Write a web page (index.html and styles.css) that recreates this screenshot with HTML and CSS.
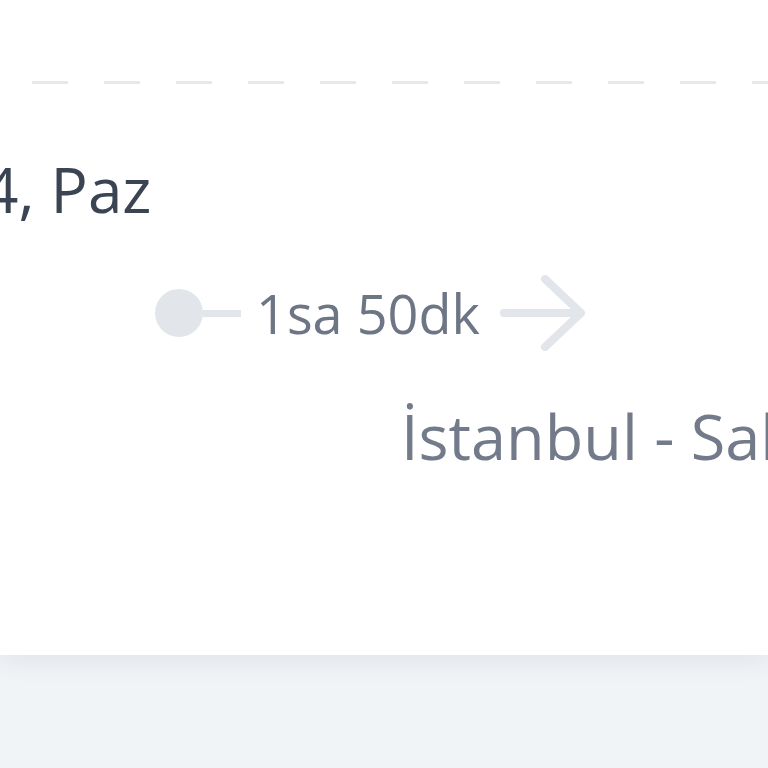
FILE: index.html
```html
<!DOCTYPE html>
<html lang="tr">
<head>
  <meta charset="UTF-8" />
  <meta name="viewport" content="width=device-width, initial-scale=1.0"/>
  <title>Uçuş Detayı</title>
  <link rel="stylesheet" href="styles.css">
</head>
<body>
  <div class="card">
    <div class="divider"></div>

    <div class="date">4, Paz</div>

    <div class="duration">
      <span class="dot"></span>
      <span class="stem"></span>
      <span class="time">1sa 50dk</span>
      <svg class="arrow" width="92" height="76" viewBox="0 0 92 76">
        <path d="M7 38 H84 M48 4 L84 38 L48 72" fill="none" stroke="#e2e6eb" stroke-width="8" stroke-linecap="round" stroke-linejoin="round"/>
      </svg>
    </div>

    <div class="route">İstanbul - Sabiha Gökçen</div>
  </div>
</body>
</html>
```

FILE: styles.css
```css
html, body {
  margin: 0;
  overflow: hidden;
}
body {
  font-family: 'Open Sans', 'Noto Sans', sans-serif;
  background: #f1f4f7;
  height: 768px;
}
.card {
  background: #fff;
  padding: 81px 0 188px;
  box-shadow: 0 6px 24px rgba(30, 41, 59, 0.08);
}
.divider {
  height: 3px;
  background-image: linear-gradient(to right, #e6e8eb 36px, transparent 36px);
  background-size: 72px 3px;
  background-position: 32px 0;
}
.date {
  margin-top: 74px;
  margin-left: -17px;
  font-size: 62px;
  line-height: 62px;
  color: #3b4453;
  white-space: nowrap;
}
.duration {
  display: flex;
  align-items: center;
  margin: 55px 0 0 155px;
}
.dot {
  width: 48px;
  height: 48px;
  border-radius: 50%;
  background: #e2e6eb;
}
.stem {
  width: 38px;
  height: 7px;
  background: #e2e6eb;
}
.time {
  margin: 0 17px 0 15px;
  font-size: 54px;
  line-height: 54px;
  color: #6e7685;
  white-space: nowrap;
}
.arrow {
  display: block;
}
.route {
  margin: 53px 0 0 401px;
  font-size: 63px;
  line-height: 63px;
  color: #737b8a;
  white-space: nowrap;
}
```
